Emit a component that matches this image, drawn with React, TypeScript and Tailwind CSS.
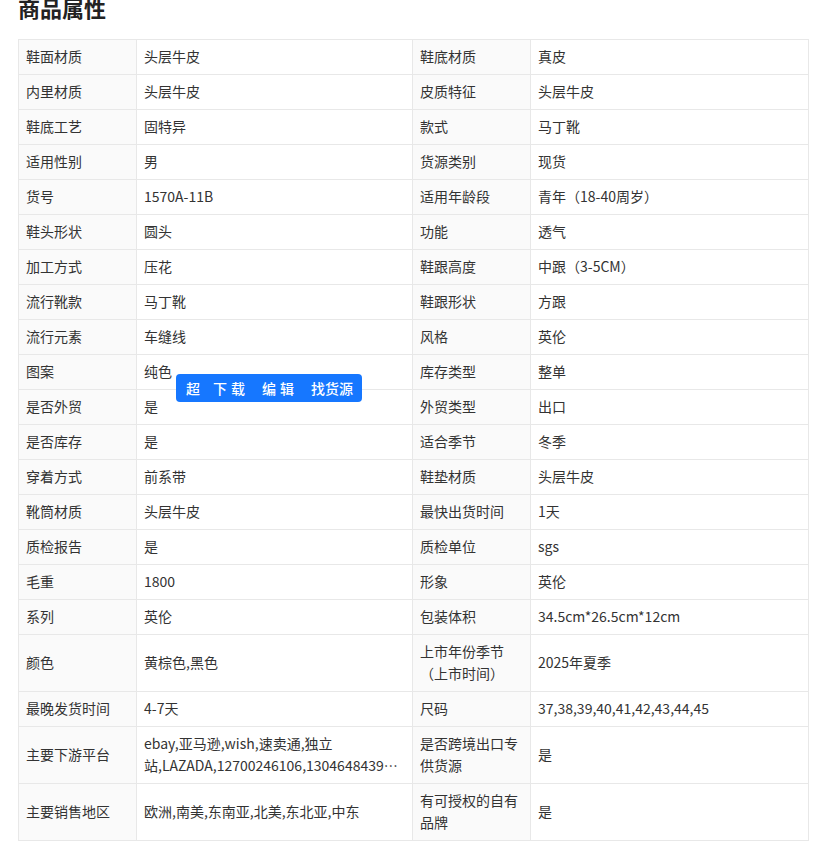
const rows: [string, string, string, string][] = [
  ['鞋面材质', '头层牛皮', '鞋底材质', '真皮'],
  ['内里材质', '头层牛皮', '皮质特征', '头层牛皮'],
  ['鞋底工艺', '固特异', '款式', '马丁靴'],
  ['适用性别', '男', '货源类别', '现货'],
  ['货号', '1570A-11B', '适用年龄段', '青年（18-40周岁）'],
  ['鞋头形状', '圆头', '功能', '透气'],
  ['加工方式', '压花', '鞋跟高度', '中跟（3-5CM）'],
  ['流行靴款', '马丁靴', '鞋跟形状', '方跟'],
  ['流行元素', '车缝线', '风格', '英伦'],
  ['图案', '纯色', '库存类型', '整单'],
  ['是否外贸', '是', '外贸类型', '出口'],
  ['是否库存', '是', '适合季节', '冬季'],
  ['穿着方式', '前系带', '鞋垫材质', '头层牛皮'],
  ['靴筒材质', '头层牛皮', '最快出货时间', '1天'],
  ['质检报告', '是', '质检单位', 'sgs'],
  ['毛重', '1800', '形象', '英伦'],
  ['系列', '英伦', '包装体积', '34.5cm*26.5cm*12cm'],
  ['颜色', '黄棕色,黑色', '上市年份季节（上市时间）', '2025年夏季'],
  ['最晚发货时间', '4-7天', '尺码', '37,38,39,40,41,42,43,44,45'],
  ['主要下游平台', '', '是否跨境出口专供货源', '是'],
  ['主要销售地区', '欧洲,南美,东南亚,北美,东北亚,中东', '有可授权的自有品牌', '是'],
];

const label = 'border border-[#e8e8e8] bg-[#fafafa] px-[7px] pt-[5px] pb-[7px] text-left align-middle font-normal';
const value = 'border border-[#e8e8e8] bg-white px-[7px] pt-[5px] pb-[7px] text-left align-middle';

export default function App() {
  return (
    <div
      className="relative min-h-[847px] overflow-hidden bg-white px-[18px] text-[14px] leading-[22px] text-[#333]"
      style={{ fontFamily: '"Noto Sans CJK SC", "Noto Sans", sans-serif' }}
    >
      <h2 className="-mt-[8px] mb-[17px] text-[22px] font-bold leading-[30px] text-[#222]">商品属性</h2>

      <table className="w-[790px] table-fixed border-collapse">
        <colgroup>
          <col className="w-[118px]" />
          <col className="w-[276px]" />
          <col className="w-[118px]" />
          <col className="w-[278px]" />
        </colgroup>
        <tbody>
          {rows.map((r, i) => {
            const tall = i >= 17 && i !== 18;
            return (
              <tr key={r[0]} className={tall ? 'h-[57px]' : 'h-[35px]'}>
                <th className={label}>{r[0]}</th>
                <td className={value}>
                  {r[0] === '主要下游平台' ? (
                    <>
                      <div className="whitespace-nowrap">ebay,亚马逊,wish,速卖通,独立</div>
                      <div className="truncate">站,LAZADA,12700246106,13046484399,3126543,2113475</div>
                    </>
                  ) : (
                    r[1]
                  )}
                </td>
                <th className={label}>{r[2]}</th>
                <td className={value}>{r[3]}</td>
              </tr>
            );
          })}
        </tbody>
      </table>

      <div className="absolute left-[176px] top-[374px] flex h-[28px] w-[186px] items-center gap-[13px] whitespace-nowrap rounded-[4px] bg-[#1677ff] px-[10px] font-medium text-white">
        <span>超</span>
        <span className="tracking-[4px]">下载</span>
        <span className="tracking-[4px]">编辑</span>
        <span>找货源</span>
      </div>
    </div>
  );
}
